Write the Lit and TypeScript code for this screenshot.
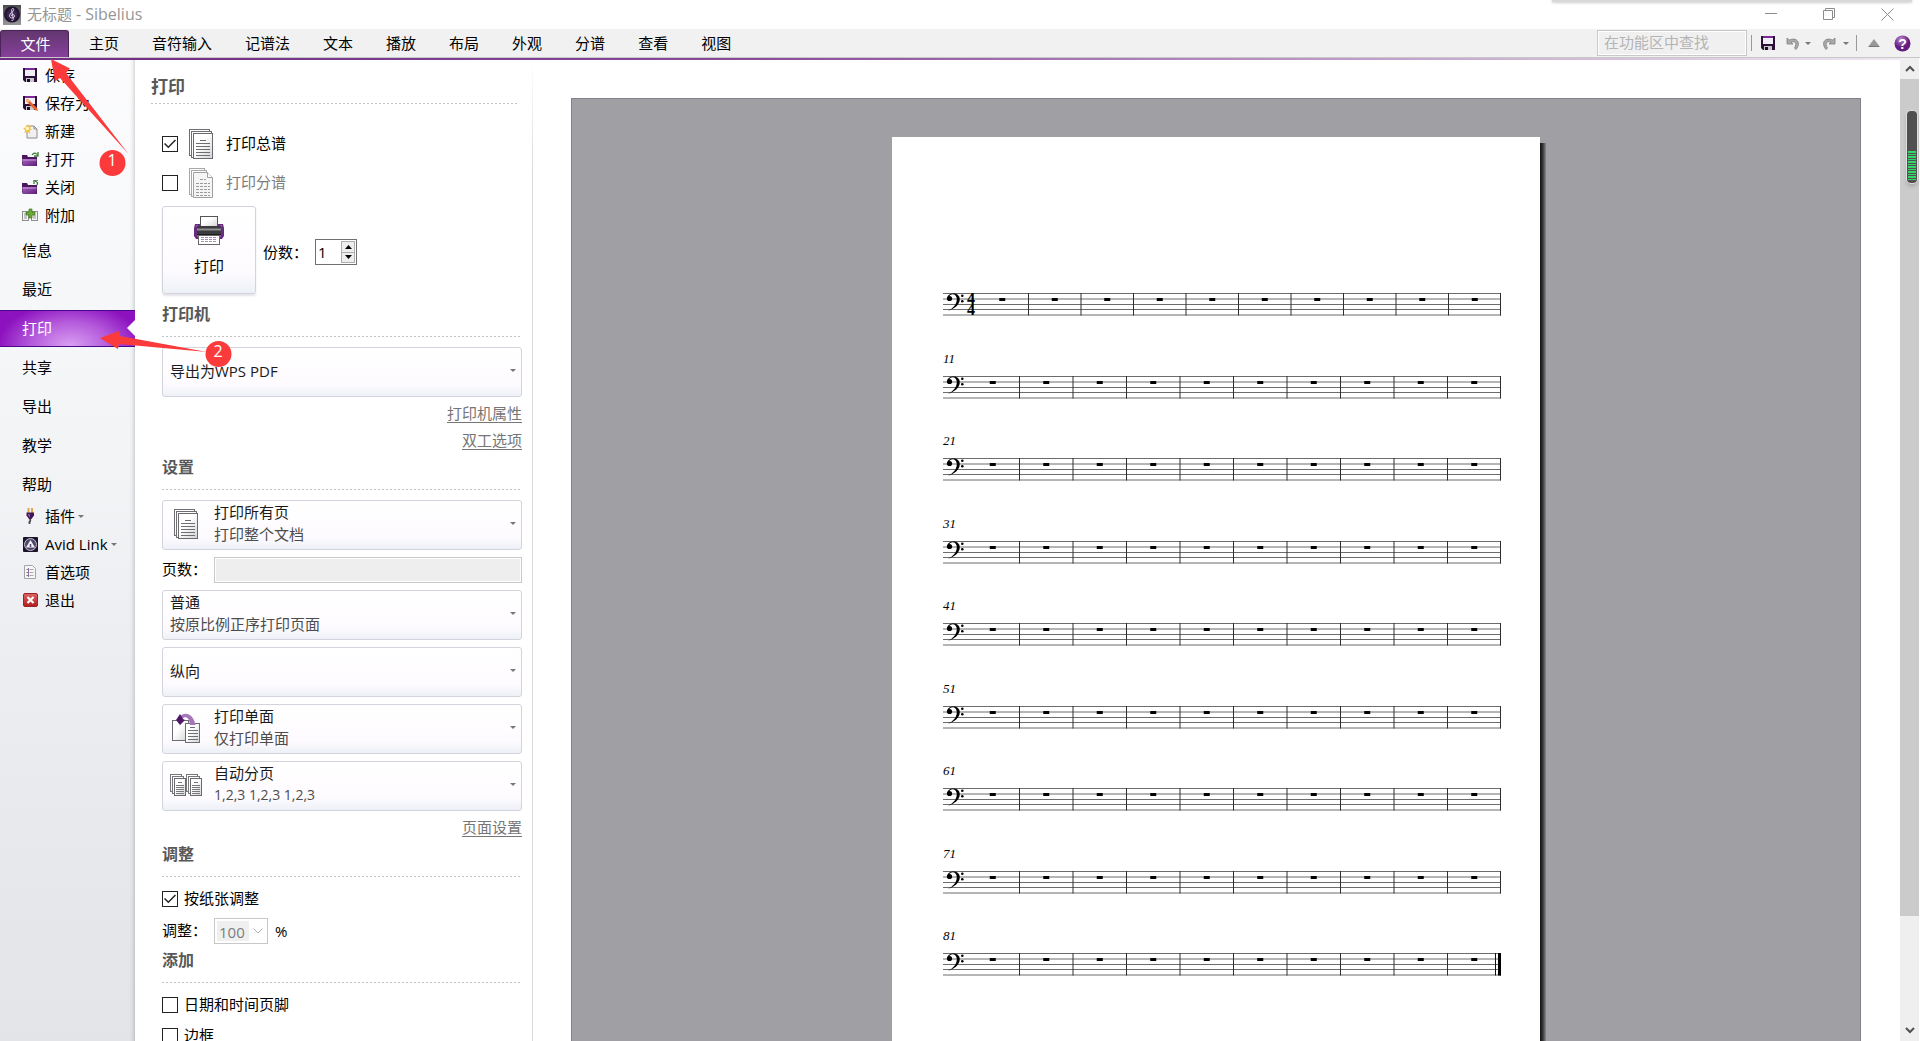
import { LitElement, html, svg, css } from "lit";
import { customElement, property } from "lit/decorators.js";

/* ---------- icons ---------- */

const floppy = svg`
  <path d="M0 0h14v14H2L0 12z" fill="#2c1038"/>
  <rect x="2" y="0" width="10" height="8" fill="#f1edf4"/>
  <rect x="2" y="0" width="10" height="2" fill="#7d2a99"/>
  <rect x="3" y="10" width="8" height="4" fill="#c9c6cc"/>
  <rect x="4" y="11" width="3" height="3" fill="#1d0b26"/>`;

const folder = svg`
  <path d="M0 3h5l1 2h9v9H1L0 12z" fill="#4b1860"/>
  <path d="M0 7h15l-1 7H1z" fill="url(#fg)"/>
  <path d="M1 8h13" stroke="#c79ad8"/>
  <defs><linearGradient id="fg" x1="0" y1="0" x2="1" y2="1">
    <stop offset="0" stop-color="#a765c0"/><stop offset="1" stop-color="#5c1c78"/>
  </linearGradient></defs>`;

const sheet = (x: number, y: number, w: number, h: number, c: string) =>
  svg`<rect x=${x} y=${y} width=${w} height=${h} fill="url(#pg)" stroke=${c}/>`;

const paperFill = svg`<defs><linearGradient id="pg" x1="0" y1="0" x2="1" y2="1">
  <stop offset="0.4" stop-color="#ffffff"/><stop offset="1" stop-color="#d3d4d6"/>
</linearGradient></defs>`;

const ICONS: Record<string, { w: number; h: number; art: unknown }> = {
  logo: {
    w: 18, h: 20,
    art: svg`
      <defs>
        <linearGradient id="lg" x1="0" y1="0" x2="0" y2="1">
          <stop offset="0" stop-color="#4a4a4c"/><stop offset="1" stop-color="#98989a"/>
        </linearGradient>
        <radialGradient id="lr"><stop offset="0" stop-color="#5a3c74"/><stop offset="1" stop-color="#180c28"/></radialGradient>
      </defs>
      <rect width="18" height="20" fill="url(#lg)"/>
      <circle cx="9" cy="9.5" r="8" fill="url(#lr)"/>
      <path d="M8.5 15.5c1.5.6 2.2-.8 1.6-2.5L8.600 5c.2-2 2.600-2.500 2 .2-.6 2-4 3.200-4.100 5.500 0 3 5 3 5 .4 0-2.200-3.300-2-3.200-.2"
        fill="none" stroke="#d6cfe0" stroke-width="1"/>`,
  },
  save: { w: 14, h: 14, art: floppy },
  saveAs: {
    w: 15, h: 15,
    art: svg`${floppy}<path d="M3 3l2 0 9 9 1 3-3-1-9-9z" fill="#e8622a"/><path d="M3 3l2 0 2 2-2 2-2-2z" fill="#f6b37c"/>`,
  },
  create: {
    w: 15, h: 15,
    art: svg`<path d="M4 2h7l3 3v9H4z" fill="#f0f0f1" stroke="#8e8e92"/><path d="M11 2v3h3" fill="none" stroke="#8e8e92"/>
      <path d="M4 0l1 2.500 3-1-1 3 2 1-2.500 1 .5 3-3-1.500-2.500 1 .5-3L0 4l2.500-.5z" fill="#f5c044"/><circle cx="4.300" cy="4.500" r="1.800" fill="#fff3b8"/>`,
  },
  open: {
    w: 17, h: 15,
    art: svg`${folder}<path d="M10 3c2-3 4-2 5-.5M16 0v4h-4" fill="none" stroke="#3c7a35" stroke-width="1.300"/>`,
  },
  close: {
    w: 17, h: 15,
    art: svg`${folder}<path d="M15 5c1-2 .5-3-2-4M12 4V0h4" fill="none" stroke="#3c7a35" stroke-width="1.300"/>`,
  },
  append: {
    w: 16, h: 14,
    art: svg`<rect x=".5" y="3.500" width="6" height="9" fill="#f4f4f4" stroke="#909090"/>
      <rect x="9.500" y="3.500" width="6" height="9" fill="#f4f4f4" stroke="#909090"/>
      <path d="M2 6h3M2 8h3M2 10h3M11 8h3M11 10h3" stroke="#999"/>
      <path d="M7 1h3v3h3v3h-3v3H7V7H4V4h3z" fill="#6aa838" stroke="#417a1c" stroke-width=".7"/>`,
  },
  plugin: {
    w: 10, h: 16,
    art: svg`<path d="M3.500 0v5M7 0v5" stroke="#e0a84a" stroke-width="2"/>
      <path d="M1.500 4.500h7.500v3L6.500 11H4L1.500 7.500z" fill="#3f1558"/><path d="M3 6h2v4L3 7z" fill="#8a4fae"/>
      <path d="M5.200 11v2c-1.200 1-1 2-.2 3" stroke="#4c4c4e" stroke-width="1.800" fill="none"/>`,
  },
  avid: {
    w: 15, h: 15,
    art: svg`<rect width="15" height="15" rx="1" fill="#1d1228"/><circle cx="7.500" cy="7.500" r="6" fill="#50486a" stroke="#c4bed0"/>
      <path d="M7.500 3L12 10.500H3z" fill="#f2f0f5"/><path d="M7.500 7v3" stroke="#50486a" stroke-width="1.500"/>`,
  },
  prefs: {
    w: 12, h: 14,
    art: svg`<path d="M.5.5h8l3 3v10H.5z" fill="#f6f6f7" stroke="#a4a4a8"/><path d="M2.500 4.500h2M2.500 7.500h2M2.500 10.500h2" stroke="#777"/>
      <path d="M5.500 4.500h4M5.500 7.500h4M5.500 10.500h4" stroke="#aaa"/><path d="M4.500 3v9" stroke="#8b6f9c"/>`,
  },
  exit: {
    w: 15, h: 14,
    art: svg`<defs><linearGradient id="ex" x1="0" y1="0" x2="0" y2="1"><stop offset="0" stop-color="#d66"/><stop offset="1" stop-color="#b01c1c"/></linearGradient></defs>
      <rect x=".5" y=".5" width="14" height="13" rx="1.500" fill="url(#ex)" stroke="#9c2424"/><path d="M4.500 4l6 6M10.500 4l-6 6" stroke="#fff" stroke-width="2.200"/>`,
  },
  undo: {
    w: 14, h: 13,
    art: svg`<path d="M1 1v6h6L5 5.200c4-1.500 6.500.8 3.500 5.800L10 12.500C16 5 10 0 3.200 3z" fill="#a9a9ab" stroke="#808082" stroke-width=".8"/>`,
  },
  redo: {
    w: 14, h: 13,
    art: svg`<path d="M13 1v6H7l2-1.800C5 3.700 2.500 6 5.500 11L4 12.500C-2 5 4 0 10.800 3z" fill="#a9a9ab" stroke="#808082" stroke-width=".8"/>`,
  },
  caret: { w: 6, h: 3, art: svg`<path d="M0 0h6L3 3z" fill="#77777a"/>` },
  collapse: { w: 12, h: 8, art: svg`<path d="M6 0l6 8H0z" fill="#98989a"/><path d="M1 7.500h10" stroke="#77777a"/>` },
  help: {
    w: 17, h: 17,
    art: svg`<defs><radialGradient id="hp" cx=".4" cy=".25"><stop offset="0" stop-color="#b98acb"/><stop offset="1" stop-color="#651c80"/></radialGradient></defs>
      <circle cx="8.500" cy="8.500" r="8" fill="url(#hp)"/><text x="8.500" y="13.500" text-anchor="middle" font-family="Liberation Sans" font-weight="700" font-size="14" fill="#fff">?</text>`,
  },
  minimize: { w: 13, h: 13, art: svg`<path d="M0 5.500h12" stroke="#8c8c8c"/>` },
  restore: { w: 13, h: 13, art: svg`<path d="M.5 2.500h9v9h-9zM2.500 2.500v-2h9v9h-2" fill="none" stroke="#8c8c8c"/>` },
  dismiss: { w: 13, h: 13, art: svg`<path d="M.5.5l12 12M12.500.5l-12 12" stroke="#8c8c8c"/>` },
  pages: {
    w: 26, h: 32,
    art: svg`${paperFill}
      ${sheet(1.5, 1.5, 20, 26, "#6e6e72")}${sheet(3.5, 3.5, 20, 26, "#6e6e72")}${sheet(5.5, 5.5, 19, 25, "#6a6a6e")}
      <path d="M12 12.500h6M8 15.500h14M8 18.500h14M8 21.500h14M8 24.500h14M8 27.500h14" stroke="#6e6e72"/>`,
  },
  parts: {
    w: 26, h: 32,
    art: svg`${paperFill}
      ${sheet(1.5, 1.5, 15, 26, "#a8a8ab")}${sheet(3.5, 3.5, 15, 26, "#a8a8ab")}
      <path d="M5.500 5.500h14l5 5v20h-19z" fill="#f5f5f6" stroke="#a0a0a3"/><path d="M19.500 5.500v5h5" fill="#fff" stroke="#a0a0a3"/>
      <path d="M12 12.500h6M8 16.500h14M8 19.500h14M8 22.500h14M8 25.500h14M8 28.500h14" stroke="#9a9a9d" stroke-dasharray="3 1"/>`,
  },
  printer: {
    w: 30, h: 32,
    art: svg`${paperFill}
      <path d="M1 9h28l1 4v8l-2 3H2l-2-3v-8z" fill="#6a2a82"/><path d="M2 11h2v11M28 11h-2v11" stroke="#b07cc4" fill="none"/>
      <rect x="6.500" y="1.500" width="17" height="10" fill="url(#pg)" stroke="#555"/>
      <path d="M3 11h24v9H3z" fill="#3b3a3d"/><path d="M3 14.500h24" stroke="#8f8e91" stroke-width="2"/>
      <path d="M3 19.500h24" stroke="#1d1c1e"/>
      <rect x="4.500" y="20.500" width="21" height="9" fill="#fff" stroke="#666"/>
      <path d="M7 22.500h16M7 24.500h16M7 26.500h16" stroke="#a890b8" stroke-dasharray="3 1"/>`,
  },
  flip: {
    w: 30, h: 32,
    art: svg`${paperFill}
      ${sheet(1.5, 8.5, 16, 20, "#6e6e72")}${sheet(14.5, 11.5, 14, 19, "#6e6e72")}
      <path d="M19 15.500h5M17 18.500h10M17 21.500h10M17 24.500h10M17 27.500h10" stroke="#6e6e72"/>
      <path d="M8 6C12-1 22 0 24.500 13h-5.500C18.500 6 15 3 11 7z" fill="#a576bb"/>
      <path d="M9 2l3 5 2 1-5 5-4-5z" fill="#4e1768"/>`,
  },
  collate: {
    w: 32, h: 22,
    art: svg`${paperFill}
      ${sheet(0.5, 0.5, 11, 17, "#78787b")}${sheet(2.5, 2.5, 11, 17, "#78787b")}${sheet(4.5, 4.5, 11, 17, "#6a6a6e")}
      ${sheet(16.5, 0.5, 11, 17, "#78787b")}${sheet(18.5, 2.5, 11, 17, "#78787b")}${sheet(20.5, 4.5, 11, 17, "#6a6a6e")}
      <path d="M8 8.500h4M6 11.500h8M6 13.500h8M6 15.500h8M6 17.500h8M6 19.500h8M24 8.500h4M22 11.500h8M22 13.500h8M22 15.500h8M22 17.500h8M22 19.500h8" stroke="#77777a"/>`,
  },
  chevronUp: { w: 10, h: 7, art: svg`<path d="M1 6l4-4 4 4" fill="none" stroke="#505050" stroke-width="2"/>` },
  chevronDown: { w: 10, h: 7, art: svg`<path d="M1 1l4 4 4-4" fill="none" stroke="#505050" stroke-width="2"/>` },
  selectArrow: { w: 10, h: 6, art: svg`<path d="M.5.5L5 5 9.500.5" fill="none" stroke="#b0b0b0"/>` },
  spinUp: { w: 7, h: 4, art: svg`<path d="M0 4h7L3.500 0z" fill="#000"/>` },
  spinDown: { w: 7, h: 4, art: svg`<path d="M0 0h7L3.500 4z" fill="#000"/>` },
};

const icon = (name: string) => {
  const i = ICONS[name];
  return html`<svg class="icon" width=${i.w} height=${i.h} viewBox="0 0 ${i.w} ${i.h}" aria-hidden="true">${i.art}</svg>`;
};

/* ---------- one line of music ---------- */

@customElement("staff-system")
export class StaffSystem extends LitElement {
  @property({ type: Number }) first = 1;
  @property({ type: Boolean }) last = false;

  static styles = css`
    :host { display: block; color: #000; }
    .number { height: 24px; font: italic 13px/14px "Liberation Serif", serif; }
    .staff { display: block; width: 100%; height: auto; overflow: visible; }
  `;

  render() {
    const opening = this.first === 1;
    const pitch = opening ? 52.5 : 53.5;
    const bars = Array.from({ length: 10 }, (_, i) => 558 - (9 - i) * pitch);
    return html`
      <div class="number">${opening ? "" : this.first}</div>
      <svg class="staff" viewBox="0 0 558 23">
        ${[0.5, 6, 11.5, 16.5, 22].map((y) => svg`<path d="M0 ${y}H558" stroke="#6c6c6c"/>`)}
        ${bars.map((x, i) => svg`
          <path d="M${i === 9 ? 557.5 : x} 0V22.500" stroke="#2e2e2e"/>
          <rect x=${x - pitch / 2 - 3} y="5" width="6" height="3" fill="#000"/>`)}
        ${this.last ? svg`<path d="M552.500 0V22.500" stroke="#111"/><rect x="555" y="0" width="3" height="22.500" fill="#000"/>` : ""}
        <circle cx="6.500" cy="5.500" r="2.600"/>
        <path d="M4.200 5.500C4-1 16.500-1.800 16.800 6c0 6-5.500 9.800-12 12 5.500-3 9-6.500 9-12C13.600-.4 6.500 0 5.400 5z"/>
        <circle cx="19.300" cy="2.700" r="1.300"/><circle cx="19.300" cy="8.200" r="1.300"/>
        ${opening ? svg`<g font-family="Liberation Serif, serif" font-weight="700" font-size="16"><text x="24" y="11">4</text><text x="24" y="22">4</text></g>` : ""}
      </svg>`;
  }
}

/* ---------- window ---------- */

const TABS = ["主页", "音符输入", "记谱法", "文本", "播放", "布局", "外观", "分谱", "查看", "视图"];

const FILE_ACTIONS = [
  ["save", "保存"], ["saveAs", "保存为"], ["create", "新建"],
  ["open", "打开"], ["close", "关闭"], ["append", "附加"],
];
const PAGES = ["信息", "最近", "打印", "共享", "导出", "教学", "帮助"];
const TOOLS: [string, string, boolean][] = [
  ["plugin", "插件", true], ["avid", "Avid Link", true], ["prefs", "首选项", false], ["exit", "退出", false],
];

@customElement("app-root")
export class AppRoot extends LitElement {
  static styles = css`
    :host {
      display: flex; flex-direction: column; position: relative; height: 100vh; overflow: hidden;
      background: #fff; color: #000;
      font: 15px/22px "Open Sans", "Noto Sans CJK SC", sans-serif;
    }
    *, *::before { box-sizing: border-box; }
    button, input, select { font: inherit; color: inherit; margin: 0; padding: 0; border: 0; background: none; border-radius: 0; }
    a { color: inherit; }
    .icon { display: block; flex: none; }

    .titlebar { display: flex; align-items: center; height: 29px; flex: none; padding: 0 26px 0 3px; color: #969696; gap: 6px; }
    .title { flex: 1; padding-bottom: 2px; }
    .appname { font-size: 16px; }
    .windowctl { display: flex; gap: 45px; }
    .snap { position: absolute; top: -4px; right: 8px; width: 360px; height: 6px; background: #d8d8d8; box-shadow: 0 1px 3px #d0d0d0; }

    .ribbon { display: flex; align-items: center; height: 29px; flex: none; background: #f1f1f1; border-bottom: 1px solid #c8c8c8; padding-right: 9px; }
    .filetab { align-self: flex-end; width: 69px; height: 27px; padding-left: 2px; color: #fff; border-radius: 3px 3px 0 0;
      border: 1px solid #4b2359; border-bottom: 0; background: linear-gradient(#63366f, #85409b); }
    .tabs { display: flex; flex: 1; gap: 33px; padding-left: 20px; }
    .search { width: 150px; height: 26px; padding: 0 6px 2px; border: 1px solid #c8c8c8; box-shadow: inset 0 0 0 1px #fff; background: #f0f0f0; }
    .search::placeholder { color: #b4b4b4; opacity: 1; }
    .quick { display: flex; align-items: center; gap: 5px; padding-left: 4px; }
    .sep { width: 1px; height: 16px; background: #999; }
    .savebtn { margin: 0 6px 0 4px; }
    .redobtn { margin: 0 2px 0 6px; }
    .sep2 { margin-left: 2px; }
    .collapsebtn { margin-left: 6px; }
    .helpbtn { margin-left: 9px; }
    .accent { height: 2px; flex: none; margin-right: 20px; background: linear-gradient(90deg, #6e2a80, #8a4b9b 40%, #f0e8f2); }

    .body { display: flex; flex: 1; min-height: 0; }

    .sidebar { flex: 0 0 135px; padding-top: 2px;
      background: linear-gradient(90deg, transparent 129px, #00000008 132px, #00000024), linear-gradient(#fcfcfe, #f2f4f6 40%, #e9ebee 70%, #e2e4e7); }
    .action { display: flex; align-items: center; width: 100%; height: 28px; padding: 0 0 2px 21px; text-align: left; }
    .glyph { display: flex; justify-content: center; width: 18px; margin-right: 6px; }
    .action .caret { margin-left: 3px; }
    .pages { padding-top: 1px; margin-bottom: -2px; }
    .page { display: block; width: 100%; height: 37px; margin: 1px 0 2px; padding: 0 0 2px 22px; text-align: left; }
    .page.current { display: flex; align-items: center; justify-content: space-between; color: #fff;
      border: solid #48088a; border-width: 1px 0;
      background: radial-gradient(ellipse 72px 44px at 52% 100%, #d9a0f2, #b45adb 55%, #8d12bf 100%); }
    .notch { border: 8px solid transparent; border-left: 0; border-right-color: #fff; }

    .settings { flex: 0 0 398px; overflow: hidden; border-right: 1px solid; border-image: linear-gradient(transparent, #d9d9dc 120px) 1; }
    .rule { height: 1px; background: repeating-linear-gradient(90deg, #c2c2c2 0 2px, transparent 2px 4px); }
    .head { margin: 0 14px 0 16px; padding-top: 14px; }
    h1, h2 { margin: 0; font-weight: 700; color: #585858; }
    h1 { font-size: 17px; line-height: 26px; padding-bottom: 3px; }
    h2 { font-size: 16px; line-height: 22px; padding-bottom: 11px; }
    .group { margin: 1px 10px 0 27px; }
    .group.first { margin-top: 9px; }
    .group.last { margin-top: 5px; }
    .stack { display: flex; flex-direction: column; gap: 7px; margin-top: 10px; }
    .rule.short { margin-right: 2px; }

    .what { margin: 21px 10px 0 27px; display: grid; gap: 1px; }
    .check { display: flex; align-items: center; gap: 6px; height: 24px; }
    .check span { padding-bottom: 2px; }
    .what .check { height: 38px; gap: 10px; }
    .what span { margin-left: 2px; }
    .check input { appearance: none; display: grid; place-items: center; width: 16px; height: 16px; border: 1px solid #222; background: #fff; flex: none; }
    .check input:checked::before { content: ""; width: 12px; height: 10px; background: #222;
      clip-path: polygon(0 50%, 9% 40%, 36% 72%, 91% 4%, 100% 14%, 36% 92%); }
    .muted { color: #7c7c7c; }
    .run { display: flex; align-items: center; margin: 4px 10px 0 27px; }
    .card { border: 1px solid #d3d3de; border-radius: 3px; background: linear-gradient(#fff, #fefbff 75%, #edf1f7); }
    .printbtn { display: flex; flex-direction: column; align-items: center; width: 94px; height: 88px; padding-top: 8px; gap: 8px; box-shadow: 0 2px 2px #e4e4ea; }
    .copies { display: flex; align-items: center; padding: 4px 0 0 7px; gap: 7px; }
    .spin { display: flex; width: 42px; height: 26px; padding: 1px; border: 1px solid #707070; background: #fff; }
    .spin input { width: 24px; padding-left: 1px; appearance: textfield; }
    .spin input::-webkit-inner-spin-button { display: none; }
    .arrows { display: grid; flex: 1; border: 1px solid #adadad; }
    .arrows button { display: grid; place-items: center; background: #eee; }
    .arrows button + button { border-top: 1px solid #adadad; }

    .combo { display: flex; align-items: center; width: 100%; height: 50px; padding: 0 5px 4px 7px; text-align: left; }
    .lines { flex: 1; color: #1a1a1a; }
    .lines span { display: block; color: #4c4c4c; }
    .lines .digits { font-size: 14px; }
    .pic { display: flex; justify-content: center; width: 32px; margin-right: 12px; padding-top: 2px; }
    .pick { display: grid; align-items: center; }
    .pick select, .pick .arrow { grid-area: 1 / 1; }
    .pick .arrow { justify-self: end; padding: 0 5px 4px 0; pointer-events: none; }
    .pick select { appearance: none; width: 100%; height: 48px; padding: 0 0 3px 7px; color: #1a1a1a; }
    .links { display: flex; flex-direction: column; align-items: flex-end; margin-top: 3px; padding-bottom: 1px; line-height: 27px; color: #767676; }
    .links a { text-underline-offset: 3px; }
    .field { display: grid; grid-template-columns: 52px 1fr; align-items: center; height: 26px; }
    .field label { padding-bottom: 2px; }
    .range { height: 26px; width: 100%; border: 1px solid #c9c9c9; box-shadow: inset 0 0 0 1px #fff; background: #eee; padding: 0 6px; }
    .scale { display: flex; align-items: center; gap: 7px; }
    .pick.zoom { width: 54px; border: 1px solid #c8c8c8; background: #fff; }
    .zoom select { height: 20px; width: 32px; margin: 2px; padding: 0 0 2px 2px; color: #7c7c7c; background: #efefef; opacity: 1; }
    .zoom .arrow { padding: 0 4px 0 0; }

    .preview { flex: 1; display: flex; justify-content: center; margin: 38px 39px 0 38px; border: 1px solid #80848e; border-bottom: 0; background: #a09fa4; }
    .paper { display: flex; width: calc(50% + 4px); margin-top: 38px; position: relative; background: #fff; padding: 132px 39px 0 51px; }
    .paper::after { content: ""; position: absolute; left: 100%; top: 6px; bottom: 0; width: 6px; background: linear-gradient(90deg, #111, #3a3a3c 50%, #8a898e); }
    .score { display: flex; flex: 1; flex-direction: column; justify-content: space-between; height: 707px; }

    .scroll { flex: 0 0 20px; display: flex; flex-direction: column; align-items: center; background: #efefef; margin-top: -2px; border-right: 1px solid #fff; }
    .scroll button { display: grid; place-items: center; height: 21px; width: 100%; flex: none; }
    .lane { flex: 1; align-self: stretch; }
    .thumb { height: 89%; background: #cbcbcb; }
    .meter { position: absolute; right: 3px; top: 111px; width: 10px; height: 72px; padding: 40px 1px 2px; border-radius: 4px; background: #505050; box-shadow: 0 0 0 1px #dedede, 0 3px 4px #0003; box-sizing: border-box; }
    .level { height: 100%; background: repeating-linear-gradient(#34d667 0 2px, #505050 2px 3px, #34d667 3px 4px, #505050 4px 5px); }

    .marks { position: absolute; left: 0; top: 0; pointer-events: none; font-size: 16px; }
  `;

  private combo(pic: string, title: string, detail: string, digits = false) {
    return html`<button class="card combo" aria-haspopup="listbox">
      ${pic ? html`<span class="pic">${icon(pic)}</span>` : ""}
      <span class="lines">${title}<span class=${digits ? "digits" : "detail"}>${detail}</span></span>${icon("caret")}
    </button>`;
  }

  private picker(label: string, value: string) {
    return html`<div class="card pick">
      <select aria-label=${label}><option>${value}</option></select>
      <span class="arrow">${icon("caret")}</span>
    </div>`;
  }

  render() {
    return html`
      <header class="titlebar">
        ${icon("logo")}<span class="title">无标题 <span class="appname">- Sibelius</span></span>
        <div class="windowctl">
          <button aria-label="最小化">${icon("minimize")}</button>
          <button aria-label="还原">${icon("restore")}</button>
          <button aria-label="关闭窗口">${icon("dismiss")}</button>
        </div>
        <div class="snap"></div>
      </header>

      <div class="ribbon">
        <button class="filetab">文件</button>
        <nav class="tabs">${TABS.map((t) => html`<button>${t}</button>`)}</nav>
        <input class="search" aria-label="在功能区中查找" placeholder="在功能区中查找" />
        <div class="quick">
          <span class="sep"></span>
          <button class="savebtn" aria-label="快速保存">${icon("save")}</button>
          <button aria-label="撤销">${icon("undo")}</button>
          <button aria-label="撤销历史">${icon("caret")}</button>
          <button class="redobtn" aria-label="重做">${icon("redo")}</button>
          <button aria-label="重做历史">${icon("caret")}</button>
          <span class="sep sep2"></span>
          <button class="collapsebtn" aria-label="折叠功能区">${icon("collapse")}</button>
          <button class="helpbtn" aria-label="帮助主题">${icon("help")}</button>
        </div>
      </div>
      <div class="accent"></div>

      <div class="body">
        <nav class="sidebar">
          ${FILE_ACTIONS.map(([i, t]) => html`<button class="action"><span class="glyph">${icon(i)}</span>${t}</button>`)}
          <div class="pages">
            ${PAGES.map((p) => p === "打印"
              ? html`<button class="page current" aria-current="page">${p}<span class="notch"></span></button>`
              : html`<button class="page">${p}</button>`)}
          </div>
          ${TOOLS.map(([i, t, more]) => html`<button class="action"><span class="glyph">${icon(i)}</span>${t}${more ? html`<span class="caret">${icon("caret")}</span>` : ""}</button>`)}
        </nav>

        <section class="settings">
          <div class="head"><h1>打印</h1><div class="rule"></div></div>
          <div class="what">
            <label class="check"><input type="checkbox" checked />${icon("pages")}<span>打印总谱</span></label>
            <label class="check muted"><input type="checkbox" />${icon("parts")}<span>打印分谱</span></label>
          </div>
          <div class="run">
            <button class="card printbtn">${icon("printer")}打印</button>
            <div class="copies">
              <label for="copies">份数：</label>
              <div class="spin">
                <input id="copies" type="number" value="1" min="1" />
                <div class="arrows">
                  <button aria-label="增加">${icon("spinUp")}</button>
                  <button aria-label="减少">${icon("spinDown")}</button>
                </div>
              </div>
            </div>
          </div>

          <div class="group first">
            <h2>打印机</h2><div class="rule short"></div>
            <div class="stack">${this.picker("打印机", "导出为WPS PDF")}</div>
            <div class="links"><a href="#printer">打印机属性</a><a href="#duplex">双工选项</a></div>
          </div>

          <div class="group">
            <h2>设置</h2><div class="rule short"></div>
            <div class="stack">
              ${this.combo("pages", "打印所有页", "打印整个文档")}
              <div class="field"><label for="range">页数：</label><input id="range" class="range" disabled /></div>
              ${this.combo("", "普通", "按原比例正序打印页面")}
              ${this.picker("方向", "纵向")}
              ${this.combo("flip", "打印单面", "仅打印单面")}
              ${this.combo("collate", "自动分页", "1,2,3 1,2,3 1,2,3", true)}
            </div>
            <div class="links"><a href="#page-setup">页面设置</a></div>
          </div>

          <div class="group">
            <h2>调整</h2><div class="rule short"></div>
            <div class="stack">
              <label class="check"><input type="checkbox" checked /><span>按纸张调整</span></label>
              <div class="field">
                <label for="scale">调整：</label>
                <div class="scale">
                  <div class="pick zoom"><select id="scale" disabled><option>100</option></select><span class="arrow">${icon("selectArrow")}</span></div>%
                </div>
              </div>
            </div>
          </div>

          <div class="group last">
            <h2>添加</h2><div class="rule short"></div>
            <div class="stack">
              <label class="check"><input type="checkbox" /><span>日期和时间页脚</span></label>
              <label class="check"><input type="checkbox" /><span>边框</span></label>
            </div>
          </div>
        </section>

        <main class="preview">
          <div class="paper">
            <div class="score">
              ${Array.from({ length: 9 }, (_, i) => html`<staff-system .first=${i * 10 + 1} .last=${i === 8}></staff-system>`)}
            </div>
          </div>
        </main>

        <div class="scroll">
          <button aria-label="向上滚动">${icon("chevronUp")}</button>
          <div class="lane"><div class="thumb"></div></div>
          <button aria-label="向下滚动">${icon("chevronDown")}</button>
        </div>
      </div>

      <div class="meter"><div class="level"></div></div>

      <svg class="marks" width="250" height="380" viewBox="0 0 250 380">
        <g fill="#fb3b3b">
          <path d="M51 59l19 9.500-4 4.500 62.500 81L60 78l-5 3z"/>
          <circle cx="112.500" cy="163" r="13"/>
          <path d="M100 338l19-7 1 5 87 16-88-8-1 5z"/>
          <circle cx="218.500" cy="354" r="13"/>
        </g>
        <g fill="#fff" text-anchor="middle"><text x="112" y="166">1</text><text x="218" y="357">2</text></g>
      </svg>
    `;
  }
}
